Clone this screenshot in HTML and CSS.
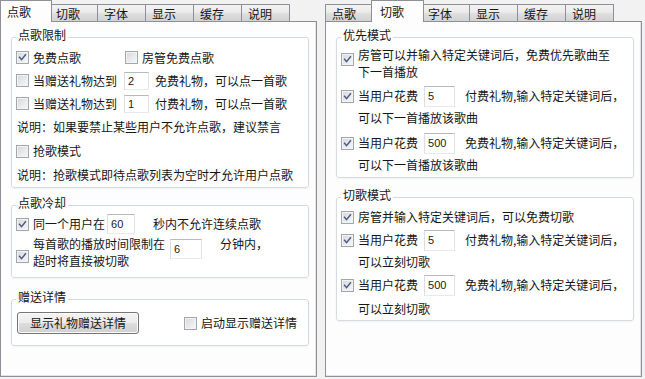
FILE: index.html
```html
<!DOCTYPE html>
<html lang="zh-CN">
<head>
<meta charset="utf-8">
<title>点歌设置</title>
<link rel="stylesheet" href="styles.css">
</head>
<body>
<div class="app">
  <section class="pane">
    <nav class="tabs">
      <div class="tab active">点歌</div>
      <div class="tab">切歌</div>
      <div class="tab">字体</div>
      <div class="tab">显示</div>
      <div class="tab">缓存</div>
      <div class="tab">说明</div>
    </nav>
    <div class="page">
      <fieldset class="group gl1">
        <legend>点歌限制</legend>
        <div class="row h23">
          <label class="chk"><span class="box on"><svg viewBox="0 0 13 13"><path d="M3 6.3 L5.4 9 L10 3.4"/></svg></span>免费点歌</label>
          <label class="chk ml44"><span class="box"></span>房管免费点歌</label>
        </div>
        <div class="row h23">
          <label class="chk"><span class="box"></span>当赠送礼物达到</label>
          <input class="num num-s ml7" type="text" value="2" readonly>
          <span class="ml6">免费礼物，可以点一首歌</span>
        </div>
        <div class="row h23">
          <label class="chk"><span class="box"></span>当赠送礼物达到</label>
          <input class="num num-s ml7" type="text" value="1" readonly>
          <span class="ml6">付费礼物，可以点一首歌</span>
        </div>
        <div class="row h24 note">说明：如果要禁止某些用户不允许点歌，建议禁言</div>
        <div class="row h24">
          <label class="chk"><span class="box"></span>抢歌模式</label>
        </div>
        <div class="row h24 note">说明：抢歌模式即待点歌列表为空时才允许用户点歌</div>
      </fieldset>

      <fieldset class="group gl2">
        <legend>点歌冷却</legend>
        <div class="row h20">
          <label class="chk"><span class="box on"><svg viewBox="0 0 13 13"><path d="M3 6.3 L5.4 9 L10 3.4"/></svg></span>同一个用户在</label>
          <input class="num num-m ml2" type="text" value="60" readonly>
          <span class="ml18">秒内不允许连续点歌</span>
        </div>
        <div class="row top mt1">
          <label class="chk multi"><span class="box on b15"><svg viewBox="0 0 13 13"><path d="M3 6.3 L5.4 9 L10 3.4"/></svg></span><span class="txt w134">每首歌的播放时间限制在<br>超时将直接被切歌</span></label>
          <input class="num num-l ml3 mt4" type="text" value="6" readonly>
          <span class="txt ml18">分钟内，</span>
        </div>
      </fieldset>

      <fieldset class="group gl3">
        <legend>赠送详情</legend>
        <div class="row h22">
          <button class="btn" type="button">显示礼物赠送详情</button>
          <label class="chk ml45"><span class="box"></span>启动显示赠送详情</label>
        </div>
      </fieldset>
    </div>
  </section>

  <section class="pane">
    <nav class="tabs">
      <div class="tab">点歌</div>
      <div class="tab active">切歌</div>
      <div class="tab">字体</div>
      <div class="tab">显示</div>
      <div class="tab">缓存</div>
      <div class="tab">说明</div>
    </nav>
    <div class="page">
      <fieldset class="group gr1">
        <legend>优先模式</legend>
        <div class="row top">
          <label class="chk multi"><span class="box on b7"><svg viewBox="0 0 13 13"><path d="M3 6.3 L5.4 9 L10 3.4"/></svg></span><span class="txt w258">房管可以并输入特定关键词后，免费优先歌曲至<br>下一首播放</span></label>
        </div>
        <div class="row h22 mt5">
          <label class="chk"><span class="box on"><svg viewBox="0 0 13 13"><path d="M3 6.3 L5.4 9 L10 3.4"/></svg></span>当用户花费</label>
          <input class="num num-r ml6" type="text" value="5" readonly>
          <span class="ml10">付费礼物,输入特定关键词后，</span>
        </div>
        <div class="row h22 sub">可以下一首播放该歌曲</div>
        <div class="row h22 mt3">
          <label class="chk"><span class="box on"><svg viewBox="0 0 13 13"><path d="M3 6.3 L5.4 9 L10 3.4"/></svg></span>当用户花费</label>
          <input class="num num-r ml6" type="text" value="500" readonly>
          <span class="ml10">免费礼物,输入特定关键词后，</span>
        </div>
        <div class="row h22 sub">可以下一首播放该歌曲</div>
      </fieldset>

      <fieldset class="group gr2">
        <legend>切歌模式</legend>
        <div class="row h22">
          <label class="chk"><span class="box on"><svg viewBox="0 0 13 13"><path d="M3 6.3 L5.4 9 L10 3.4"/></svg></span>房管并输入特定关键词后，可以免费切歌</label>
        </div>
        <div class="row h22 mt1">
          <label class="chk"><span class="box on"><svg viewBox="0 0 13 13"><path d="M3 6.3 L5.4 9 L10 3.4"/></svg></span>当用户花费</label>
          <input class="num num-r ml6" type="text" value="5" readonly>
          <span class="ml10">付费礼物,输入特定关键词后，</span>
        </div>
        <div class="row h22 sub">可以立刻切歌</div>
        <div class="row h22 mt1">
          <label class="chk"><span class="box on"><svg viewBox="0 0 13 13"><path d="M3 6.3 L5.4 9 L10 3.4"/></svg></span>当用户花费</label>
          <input class="num num-r ml6" type="text" value="500" readonly>
          <span class="ml10">免费礼物,输入特定关键词后，</span>
        </div>
        <div class="row h22 sub mt2">可以立刻切歌</div>
      </fieldset>
    </div>
  </section>
</div>
</body>
</html>
```

FILE: styles.css
```css
* { box-sizing: border-box; }

html, body { margin: 0; padding: 0; }

body {
  background: #f2f2f2;
  font-family: "Noto Sans CJK SC", "Noto Sans", sans-serif;
  font-size: 12px;
  line-height: 14px;
  color: #161616;
}

.app {
  display: flex;
  gap: 8px;
  width: 645px;
  height: 379px;
}

.pane {
  width: 317px;
  height: 377px;
  display: flex;
  flex-direction: column;
}

/* ---- tabs ---- */
.tabs {
  display: flex;
  align-items: flex-end;
  height: 22px;
  margin-bottom: -1px;
  position: relative;
  z-index: 1;
}

.tab {
  width: 49px;
  height: 18px;
  margin-left: -1px;
  padding: 2px 0 0 6px;
  border: 1px solid #8d9097;
  background: linear-gradient(#f3f3f3 0%, #ebebeb 45%, #dedede 55%, #d2d2d2 100%);
  white-space: nowrap;
  position: relative;
}

.tab:first-child { margin-left: 0; }

.tab.active {
  width: 53px;
  height: 22px;
  margin-left: -3px;
  margin-right: -2px;
  padding: 4px 0 0 8px;
  border-bottom: 0;
  background: #fdfdfd;
  z-index: 2;
}

.tab.active:first-child {
  width: 52px;
  margin-left: 0;
  padding-left: 6px;
}

/* ---- page ---- */
.page {
  flex: 1;
  border: 1px solid #8d9097;
  background: #fdfdfd;
  padding-left: 10px;
  box-shadow: inset -1px -1px 0 #e4e4e4;
}

/* ---- group boxes ---- */
.group {
  width: 298px;
  min-inline-size: 0;
  margin: 0;
  padding: 0 4px;
  border: 1px solid #d6dbe0;
  border-radius: 3px;
  background: #ffffff;
  box-shadow: 0 1px 2px rgba(0, 0, 0, 0.05);
}

.group legend {
  padding: 0 2px 4px;
  line-height: 14px;
  margin-left: 0;
}

.gl1 { margin-top: 6px; }
.gl2 { margin-top: 8px; padding-bottom: 8px; }
.gl3 { margin-top: 12px; padding-top: 4px; padding-bottom: 11px; }
.gr1 { margin-top: 6px; padding-bottom: 1px; }
.gr2 { margin-top: 10px; }

/* ---- rows ---- */
.row {
  display: flex;
  align-items: center;
  white-space: nowrap;
}

.row.top { align-items: flex-start; }

.h20 { height: 20px; }
.h22 { height: 22px; }
.h23 { height: 23px; }
.h24 { height: 24px; }

.note { padding-left: 1px; }
.sub { padding-left: 17px; }

.mt1 { margin-top: 1px; }
.mt2 { margin-top: 2px; }
.mt3 { margin-top: 3px; }
.mt4 { margin-top: 4px; }
.mt5 { margin-top: 5px; }

.ml2 { margin-left: 2px; }
.ml3 { margin-left: 3px; }
.ml6 { margin-left: 6px; }
.ml7 { margin-left: 7px; }
.ml10 { margin-left: 10px; }
.ml18 { margin-left: 18px; }
.ml44 { margin-left: 44px; }
.ml45 { margin-left: 45px; }

/* ---- checkbox ---- */
.chk {
  display: inline-flex;
  align-items: center;
}

.chk.multi { align-items: flex-start; }

.box {
  width: 13px;
  height: 13px;
  flex: none;
  margin-right: 4px;
  border: 1px solid #a3a6ab;
  background: linear-gradient(135deg, #d4d6d9 0%, #e9eaeb 55%, #f7f7f7 100%);
  box-shadow: inset 0 0 0 1px #f3f3f3;
  display: inline-flex;
}

.box svg {
  width: 11px;
  height: 11px;
  display: block;
}

.box svg path {
  fill: none;
  stroke: #4b5a86;
  stroke-width: 1.7;
  stroke-linecap: square;
}

.box.b7 { margin-top: 7px; }
.box.b15 { margin-top: 15px; }

.txt {
  display: inline-block;
  line-height: 17px;
  white-space: nowrap;
}

.w134 { width: 134px; }
.w258 { width: 258px; }

/* ---- number inputs ---- */
.num {
  flex: none;
  margin-bottom: 0;
  padding: 0 0 0 3px;
  border: 1px solid;
  border-color: #b7b9be #e2e4e8 #e6e9ed #dcdee3;
  background: #ffffff;
  font-family: "Liberation Sans", sans-serif;
  font-size: 11px;
  color: #222;
  outline: none;
}

.num-s { width: 25px; height: 18px; }
.num-m { width: 28px; height: 20px; }
.num-l { width: 32px; height: 20px; }
.num-r { width: 31px; height: 21px; }

/* ---- button ---- */
.btn {
  width: 122px;
  height: 22px;
  margin: 0 0 0 1px;
  padding: 0;
  border: 1px solid #767676;
  border-radius: 3px;
  background: linear-gradient(#f4f4f4 0%, #ececec 48%, #dddddd 52%, #d0d0d0 100%);
  box-shadow: inset 0 0 0 1px #fbfbfb;
  font-family: "Noto Sans CJK SC", sans-serif;
  font-size: 12px;
  line-height: 14px;
  color: #161616;
}
```
